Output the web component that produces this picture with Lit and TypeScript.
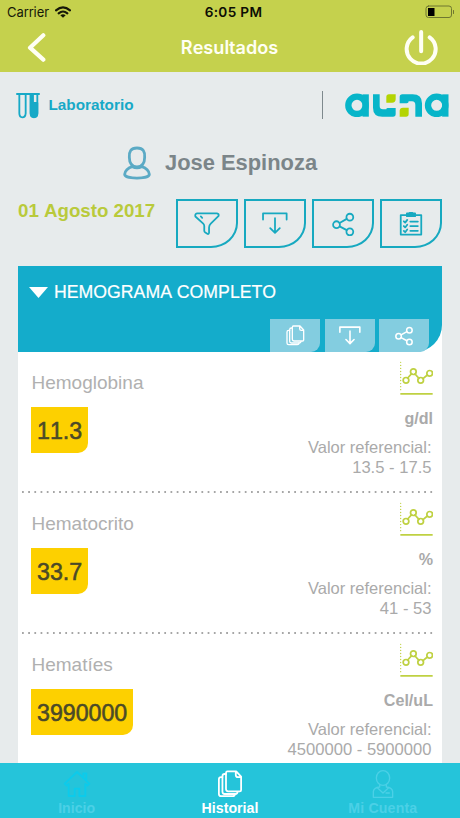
import { LitElement, html, css, svg } from "lit";
import { customElement } from "lit/decorators.js";

const pages = svg`<path d="M22 3h20l11 12v30q0 3-3 3H24q-5 0-5-5V8q0-5 3-5zM41 4v7q0 5 5 5h7"/><path d="M19 9h-3q-5 0-5 5v35q0 5 5 5h24q5 0 5-5"/><path d="M11 16H8q-5 0-5 5v33q0 5 5 5h26q5 0 5-5"/>`;
const download = svg`<path d="M3 22V4h69v18M38 18v42M24 47l14 14 14-14"/>`;
const share = svg`<circle cx="13" cy="37" r="10"/><circle cx="52" cy="15" r="10"/><circle cx="52" cy="58" r="10"/><path d="M22 32l21-12M22 42l21 11"/>`;
const funnel = svg`<path d="M9 4h58q6 1 5 7L49 34Q44 39 44 45v16q-1 4-4 3l-8-5q-2-1-2-4V41q0-4-3-7L4 13Q2 5 9 4z"/><path d="M20 13l4 4"/>`;
const checklist = svg`<path d="M3 9h60v57H3z"/><path d="M21 4h6q6-5 12 0h6v8H21z" fill="currentColor"/><path d="M31 28h22M31 41h22M31 55h22M12 27l4 4 6-8M12 41l4 4 6-8M12 55l4 4 6-8"/>`;

@customElement("app-root")
export class AppRoot extends LitElement {
  static styles = css`
    :host { display: flex; flex-direction: column; height: 818px; width: 460px; overflow: hidden; background: #e7ebec; font-family: "Liberation Sans", Arial, sans-serif; white-space: nowrap; font-kerning: none; }
    * { box-sizing: border-box; }
    svg { display: block; flex: none; fill: none; stroke: currentColor; stroke-linecap: round; stroke-linejoin: round; }
    .top { height: 72px; flex: none; background: #c5d14d; font-family: Inter, sans-serif; }
    .status { height: 24px; display: grid; grid-template-columns: 1fr auto 1fr; align-items: center; padding: 0 5px 0 12px; color: #161808; font-size: 13px; }
    .carrier { display: flex; align-items: center; gap: 6px; margin-left: -5px; }
    .clock { font-weight: 600; font-size: 13.6px; letter-spacing: .35px; color: #0c0d04; }
    .battery { justify-self: end; color: #6f7730; }
    .bar { height: 48px; display: grid; grid-template-columns: 1fr auto 1fr; align-items: center; color: #fffff4; padding: 0 21px 2px 27px; }
    .title { font-weight: 600; font-size: 18.1px; margin-left: -7px; margin-top: -1px; }
    .back { margin-top: -1px; }
    .power { justify-self: end; }
    .brand { height: 66px; flex: none; display: flex; align-items: center; padding: 0 10px 0 16px; }
    .tubes { color: #17a9c7; }
    .logo { color: #07b5c9; stroke-linecap: butt; stroke-linejoin: miter; }
    .lab { color: #17a9c7; font-size: 15.3px; font-weight: bold; margin-left: 8.5px; flex: 1; }
    .rule { width: 1px; height: 28px; background: #7e898d; margin-right: 22px; }
    .patient { height: 50px; flex: none; display: flex; align-items: center; gap: 14px; color: #7b8589; font-size: 21.9px; font-weight: bold; padding-left: 123px; }
    .patient svg { color: #5baac5; }
    .tools { height: 78px; flex: none; display: flex; justify-content: space-between; padding: 11px 18px 0; }
    .date { color: #b9ca3b; font-size: 18.7px; font-weight: bold; line-height: 24px; }
    .actions { display: flex; gap: 6px; color: #17a9c0; }
    .action { width: 62px; height: 49px; border: 2px solid #17a9c0; border-bottom-right-radius: 27px 25px; display: flex; align-items: center; justify-content: center; }
    .card { flex: 1; min-height: 0; overflow: hidden; margin: 0 18px; background: #fff; }
    .head { height: 86px; background: #14accb; border-bottom-right-radius: 27px; color: #fff; display: flex; flex-direction: column; justify-content: space-between; padding: 15px 13px 0 11px; }
    .group { display: flex; align-items: center; gap: 6px; font-size: 17.7px; line-height: 22px; -webkit-text-stroke: .2px #fff; }
    .sub { display: flex; gap: 4.5px; justify-content: flex-end; }
    .mini { width: 50px; height: 33px; background: #83cde0; border-bottom-right-radius: 9px; display: flex; align-items: center; justify-content: center; }
    .row { height: 141px; display: grid; grid-template-columns: auto 1fr; grid-template-rows: 139px 2px; padding: 0 9px 0 13px; }
    .name { color: #b0b0b0; font-size: 19px; line-height: 22px; margin-top: 20px; padding-left: .5px; }
    .value { display: inline-block; margin-top: 13px; height: 46px; padding: 1px 6px 0; line-height: 46px; background: #fdd000; color: #4b4a28; -webkit-text-stroke: .55px #4b4a28; font-size: 23.2px; border-bottom-right-radius: 10px; }
    .right { display: flex; flex-direction: column; align-items: flex-end; color: #aaa; }
    .chart { margin-top: 9px; color: #bfd142; }
    .unit { font-weight: bold; font-size: 16.1px; line-height: 20px; margin-top: 12px; }
    .ref { font-size: 16.6px; line-height: 20px; margin-top: 9px; padding-right: 1.5px; text-align: right; }
    .label { font-size: 16.5px; font-kerning: normal; }
    .dots { grid-column: 1 / 3; margin-left: -9px; height: 2px; background: radial-gradient(circle at 1px 1px, #a6a6a6 .9px, transparent 1.3px) 0 0 / 6.2px 2px repeat-x; }
    .nav { height: 55px; flex: none; background: #25c4da; display: grid; grid-template-columns: repeat(3, 1fr); color: #4bd0e6; font-size: 14.2px; font-weight: bold; }
    .tab { display: flex; flex-direction: column; align-items: center; padding-top: 7px; line-height: 17px; gap: 2px; }
    .tab.on { color: #fff; }
    .account { letter-spacing: .15px; padding-right: 1px; }
    .home svg { color: #0ccbeb; }
  `;

  action(i: unknown) {
    return html`<div class="action"><svg width="26" height="24" viewBox="0 0 76 70" stroke-width="5.2">${i}</svg></div>`;
  }

  row(name: string, value: string, unit: string, ref: string) {
    return html`<div class="row">
      <div><div class="name">${name}</div><div class="value">${value}</div></div>
      <div class="right">
        <svg class="chart" width="34" height="35" viewBox="0 0 102 105" stroke-width="5.2">
          <path d="M5 4v84" stroke-width="4" stroke-dasharray=".1 9"/>
          <path d="M4 98.500h97" stroke-linecap="butt" stroke-width="5.500"/>
          <circle cx="21" cy="58" r="8.5"/><circle cx="43" cy="32" r="8.5"/><circle cx="65" cy="58" r="8.5"/><circle cx="92" cy="37" r="8.5"/>
          <path d="M26 51l12-13M48 39l12 13M72 53l13-11"/>
        </svg>
        <div class="unit">${unit}</div>
        <div class="ref"><span class="label">Valor referencial:</span><br>${ref}</div>
      </div>
      <div class="dots"></div>
    </div>`;
  }

  render() {
    return html`
      <div class="top">
        <div class="status">
          <div class="carrier">Carrier
            <svg width="16" height="12" viewBox="0 0 48 36" stroke-width="6.5"><path d="M3 13q21-18 42 0M11 22q13-11 26 0"/><path d="M16 28q8-7 16 0l-8 7z" fill="currentColor" stroke="none"/></svg>
          </div>
          <div class="clock">6:05 PM</div>
          <svg class="battery" width="30" height="14" viewBox="0 0 30 14"><rect x="1" y="1" width="25.5" height="11.5" rx="2.5"/><rect x="3" y="3" width="6.5" height="8" fill="#000" stroke="none"/><path d="M28.5 5.5v3"/></svg>
        </div>
        <div class="bar">
          <svg class="back" width="20" height="30" viewBox="0 0 60 90" stroke-width="12.5"><path d="M49 10L9 47l40 36"/></svg>
          <div class="title">Resultados</div>
          <svg class="power" width="36" height="36" viewBox="0 0 108 108" stroke-width="12"><path d="M29 25a43.500 43.500 0 1 0 51 0M54.500 9v58"/></svg>
        </div>
      </div>
      <div class="brand">
        <svg class="tubes" width="24" height="27" viewBox="0 0 72 81" stroke-width="5.500"><path d="M3 6h66" stroke-width="6"/><path d="M10 8v56q0 12 9 12t10-12V8M44 8v56q0 12 10 12t10-12V8"/><path d="M44 8h7v25h13v31q0 11-10 11t-10-11z" fill="currentColor"/></svg>
        <div class="lab">Laboratorio</div>
        <div class="rule"></div>
        <svg class="logo" width="105" height="24" viewBox="0 0 315 72">
          <circle cx="36" cy="37" r="26" stroke-width="19"/><path d="M62 4v67" stroke-width="19"/>
          <path d="M84 4h20v35q0 10 10 10h10q0-4 4-4h24v18q0 8-8 8h-32q-28 0-28-27z" fill="currentColor" stroke="none"/>
          <path d="M124 12q0-8 8-8h20v14q0 11-11 11h-17z" fill="#b4d402" stroke="none"/>
          <path d="M164 12q0-8 8-8h31q28 0 28 27v40h-20V36q0-11-10-11h-10q0 6-6 6h-21z" fill="currentColor" stroke="none"/>
          <path d="M164 54q0-10 10-10h17v19q0 8-8 8h-19z" fill="#b4d402" stroke="none"/>
          <circle cx="275" cy="37" r="26" stroke-width="19"/><path d="M301 4v67" stroke-width="19"/>
        </svg>
      </div>
      <div class="patient">
        <svg width="28" height="34" viewBox="0 0 84 102" stroke-width="8.5"><path d="M42 6c19 0 24 11 23 28 0 17-8 29-23 29S19 51 19 34C18 17 23 6 42 6z"/><path d="M28 62C15 65 5 76 5 85c0 15 74 15 74 0 0-9-10-20-23-23q-14 7-28 0"/></svg>
        Jose Espinoza
      </div>
      <div class="tools">
        <div class="date">01 Agosto 2017</div>
        <div class="actions">${this.action(funnel)}${this.action(download)}${this.action(svg`<g transform="translate(6 0)">${share}</g>`)}${this.action(svg`<g transform="translate(5 0)">${checklist}</g>`)}</div>
      </div>
      <div class="card">
        <div class="head">
          <div class="group"><svg width="19" height="11" viewBox="0 0 19 11"><path d="M0 0h19L9.500 11z" fill="#fff" stroke="none"/></svg>HEMOGRAMA COMPLETO</div>
          <div class="sub">
            <div class="mini"><svg width="19" height="21" viewBox="0 0 57 63" stroke-width="4">${pages}</svg></div>
            <div class="mini"><svg width="22" height="21" viewBox="0 0 76 66" stroke-width="5.5">${download}</svg></div>
            <div class="mini"><svg width="18" height="20" viewBox="0 0 65 72" stroke-width="5.5">${share}</svg></div>
          </div>
        </div>
        ${this.row("Hemoglobina", "11.3", "g/dl", "13.5 - 17.5")}
        ${this.row("Hematocrito", "33.7", "%", "41 - 53")}
        ${this.row("Hematíes", "3990000", "Cel/uL", "4500000 - 5900000")}
      </div>
      <div class="nav">
        <div class="tab home"><svg width="28" height="28" viewBox="0 0 84 84" stroke-width="5.5"><path d="M5 41L42 6l37 35-6 6-6-5v36H49V56H35v22H17V42l-6 5zM61 22V10h9v21"/></svg>Inicio</div>
        <div class="tab on"><svg width="26" height="28" viewBox="-1 0 58 63" stroke-width="4">${pages}</svg>Historial</div>
        <div class="tab account"><svg width="22" height="28" viewBox="0 0 66 84" stroke-width="4"><ellipse cx="33" cy="24" rx="20" ry="22"/><path d="M23 44v7Q5 53 4 65v17h58V65q-1-12-19-14v-7M16 53l17 16 17-16M42 69h10"/></svg>Mi Cuenta</div>
      </div>`;
  }
}
